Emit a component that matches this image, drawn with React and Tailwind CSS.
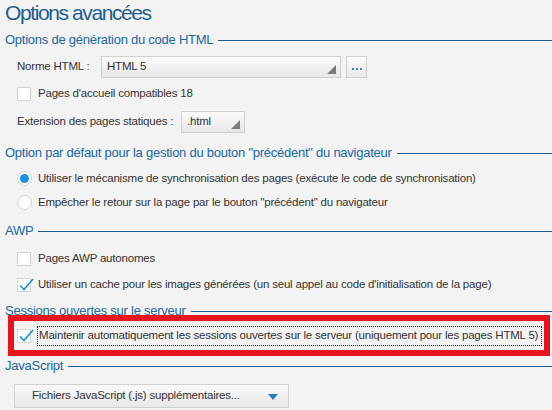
import React from "react";

const font = { fontFamily: '"Liberation Sans", Arial, sans-serif' };

function Header({ children }) {
  return (
    <div className="flex items-center gap-[5px] h-[16px]">
      <span className="text-[13px] tracking-[-0.25px] leading-none text-[#2067a3] whitespace-nowrap">{children}</span>
      <div className="flex-1 h-[1px] bg-[#1f5d8c] mt-[2px]" />
    </div>
  );
}

function Checkbox({ checked }) {
  return (
    <div className="relative w-[14px] h-[14px] bg-white border border-[#d4d4d4] shrink-0">
      {checked && (
        <svg className="absolute left-[0px] top-[-2px]" width="17" height="16" viewBox="0 0 17 16">
          <path d="M2 8.5 L6 12.5 L15 2" fill="none" stroke="#1b8fd8" strokeWidth="1.6" />
        </svg>
      )}
    </div>
  );
}

function Radio({ checked }) {
  return (
    <div className="w-[15px] h-[15px] rounded-full bg-white border border-[#cfcfcf] flex items-center justify-center shrink-0">
      {checked && <div className="w-[9px] h-[9px] rounded-full bg-[#1a8fe3]" />}
    </div>
  );
}

function Select({ value, className }) {
  return (
    <div className={"relative h-[22px] border border-[#d0d0d0] bg-gradient-to-b from-[#fbfbfb] to-[#e7e7e7] flex items-center pl-[5px] " + className}>
      {value}
      <div className="absolute right-[4px] bottom-[3px] w-0 h-0 border-l-[9px] border-l-transparent border-b-[9px] border-b-[#7a7a7a]" />
    </div>
  );
}

export default function App() {
  return (
    <div style={font} className="w-[552px] h-[410px] bg-[#f3f3f3] overflow-hidden text-[#333] text-[11.5px] tracking-[-0.2px] pl-[5px] whitespace-nowrap">
      <div className="text-[21px] tracking-[-1.4px] leading-[26px] text-[#1d5e91]">Options avancées</div>

      <div className="mt-[5px]">
        <Header>Options de génération du code HTML</Header>
      </div>

      <div className="flex items-center mt-[9px] pl-[12px]">
        <span className="w-[84px]">Norme HTML :</span>
        <Select value="HTML 5" className="w-[240px]" />
        <div className="ml-[5px] w-[21px] h-[22px] border border-[#d0d0d0] bg-gradient-to-b from-[#fbfbfb] to-[#e9e9e9] flex items-center justify-center gap-[2px] pt-[3px]">
          <div className="w-[2px] h-[2px] bg-[#3b84c4]" />
          <div className="w-[2px] h-[2px] bg-[#3b84c4]" />
          <div className="w-[2px] h-[2px] bg-[#3b84c4]" />
        </div>
      </div>

      <div className="flex items-center mt-[9px] pl-[12px] gap-[7px] h-[14px]">
        <Checkbox />
        <span>Pages d'accueil compatibles 18</span>
      </div>

      <div className="flex items-center mt-[10px] pl-[12px]">
        <span className="w-[164px]">Extension des pages statiques :</span>
        <Select value=".html" className="w-[64px]" />
      </div>

      <div className="mt-[11px]">
        <Header>Option par défaut pour la gestion du bouton "précédent" du navigateur</Header>
      </div>

      <div className="flex items-center mt-[11px] pl-[12px] gap-[6px] h-[15px]">
        <Radio checked />
        <span>Utiliser le mécanisme de synchronisation des pages (exécute le code de synchronisation)</span>
      </div>
      <div className="flex items-center mt-[9px] pl-[12px] gap-[6px] h-[15px]">
        <Radio />
        <span>Empêcher le retour sur la page par le bouton "précédent" du navigateur</span>
      </div>

      <div className="mt-[12px]">
        <Header>AWP</Header>
      </div>

      <div className="flex items-center mt-[14px] pl-[12px] gap-[7px] h-[14px]">
        <Checkbox />
        <span>Pages AWP autonomes</span>
      </div>
      <div className="flex items-center mt-[12px] pl-[12px] gap-[7px] h-[14px]">
        <Checkbox checked />
        <span>Utiliser un cache pour les images générées (un seul appel au code d'initialisation de la page)</span>
      </div>

      <div className="mt-[10px]">
        <Header>Sessions ouvertes sur le serveur</Header>
      </div>

      <div className="mt-[-3px] ml-[3px] mr-[2px] h-[41px] border-[6px] border-[#e8141e] flex items-center pl-[3px] pr-[2px] gap-[6px]">
        <Checkbox checked />
        <span className="flex-1 border border-dotted border-[#222] h-[20px] flex items-center pl-[1px]">
          Maintenir automatiquement les sessions ouvertes sur le serveur (uniquement pour les pages HTML 5)
        </span>
      </div>

      <div className="mt-[1px]">
        <Header>JavaScript</Header>
      </div>

      <div className="mt-[11px] ml-[9px] w-[275px] h-[24px] border border-[#d0d0d0] bg-gradient-to-b from-[#fafafa] to-[#e8e8e8] flex items-center pl-[17px] relative">
        Fichiers JavaScript (.js) supplémentaires...
        <div className="absolute left-[253px] top-[9px] w-0 h-0 border-l-[5px] border-r-[5px] border-t-[6px] border-l-transparent border-r-transparent border-t-[#2b7cc3]" />
      </div>
    </div>
  );
}
